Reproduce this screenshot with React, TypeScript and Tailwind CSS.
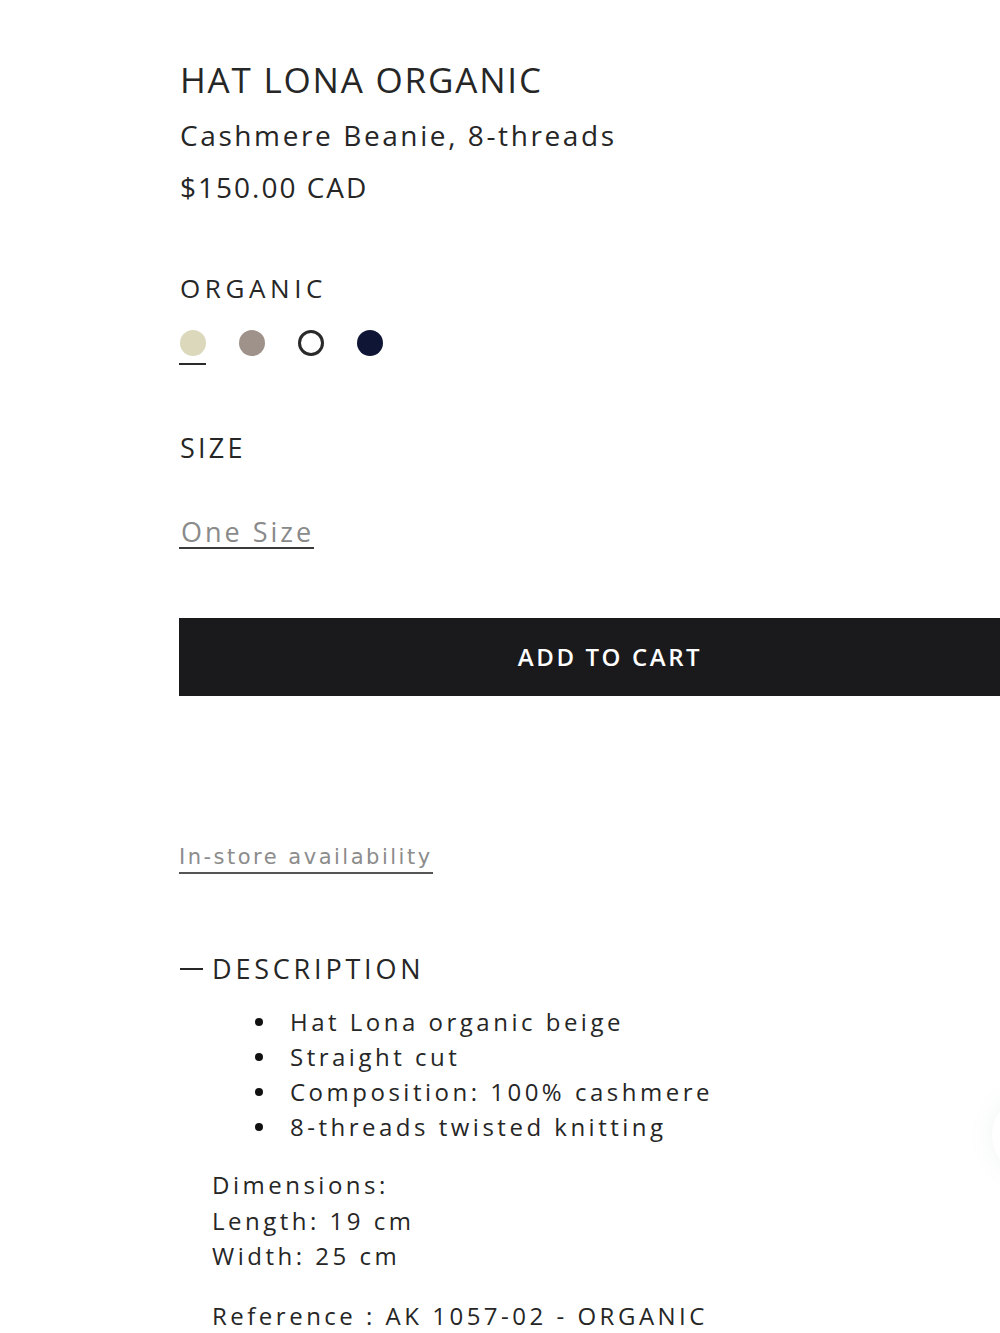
import React from "react";

const swatches = [
  { name: "Beige", cls: "bg-[#dcd8bc]", active: true },
  { name: "Taupe", cls: "bg-[#9e928a]", active: false },
  { name: "White", cls: "bg-white border-[3px] border-[#2a2a2a]", active: false },
  { name: "Navy", cls: "bg-[#0f1535]", active: false },
];

const bullets = [
  "Hat Lona organic beige",
  "Straight cut",
  "Composition: 100% cashmere",
  "8-threads twisted knitting",
];

const App = () => {
  return (
    <div className="relative w-[1000px] h-[1333px] overflow-hidden bg-white text-[#262626] font-['Open_Sans',sans-serif]">
      <div className="pl-[179px] pt-[60px]">
        {/* Product header */}
        <h1 className="text-[35px] leading-[40px] tracking-[1.8px] pl-[1px]">HAT LONA ORGANIC</h1>
        <p className="mt-[15px] text-[28px] leading-[40px] tracking-[2.6px] pl-[1px]">
          Cashmere Beanie, 8-threads
        </p>
        <p className="mt-[12px] text-[28px] leading-[40px] tracking-[2px] pl-[1px]">$150.00 CAD</p>

        {/* Colour */}
        <p className="mt-[61px] text-[26px] leading-[40px] tracking-[4.6px] pl-[1px]">ORGANIC</p>
        <div className="mt-[22px] flex gap-[32px]">
          {swatches.map((s) => (
            <button key={s.name} aria-label={s.name} className="flex flex-col items-center">
              <span className={`block w-[26px] h-[26px] rounded-full ${s.cls}`} />
              <span
                className={`block mt-[7px] w-[27px] h-[2px] ${s.active ? "bg-[#2a2a2a]" : "bg-transparent"}`}
              />
            </button>
          ))}
        </div>

        {/* Size */}
        <p className="mt-[63px] text-[27px] leading-[40px] tracking-[3.2px] pl-[1px]">SIZE</p>
        <div className="mt-[49px]">
          <span className="inline-block text-[27px] leading-[30px] tracking-[3px] text-[#8a8a8a] border-b-[2px] border-[#3a3a3a] pl-[2px]">
            One Size
          </span>
        </div>

        <button className="mt-[69px] block w-[862px] h-[78px] bg-[#1a1a1c] text-white text-[24px] font-semibold tracking-[2.6px]">
          ADD TO CART
        </button>

        <div className="mt-[146px]">
          <span className="inline-block text-[21px] leading-[30px] tracking-[2.5px] text-[#8c8c8c] border-b-[2px] border-[#555] font-['DejaVu_Sans',sans-serif]">
            In-store availability
          </span>
        </div>

        {/* Description */}
        <div className="mt-[77px] flex items-center h-[36px] text-[27px] tracking-[3.8px]">
          <span className="block w-[23px] h-[2px] bg-[#262626] ml-[1px]" />
          <span className="ml-[9px]">DESCRIPTION</span>
        </div>
        <div className="pl-[33px] text-[24px] tracking-[3.5px]">
          <ul className="mt-[17px]">
            {bullets.map((b) => (
              <li key={b} className="flex items-center h-[35px]">
                <span className="block w-[8px] h-[8px] rounded-full bg-[#111] ml-[43px]" />
                <span className="ml-[27px]">{b}</span>
              </li>
            ))}
          </ul>
          <div className="mt-[23px] leading-[35.5px]">
            <p>Dimensions:</p>
            <p>Length: 19 cm</p>
            <p>Width: 25 cm</p>
          </div>
          <p className="mt-[24px] leading-[36px]">Reference : AK 1057-02 - ORGANIC</p>
        </div>
      </div>

      {/* floating widget edge */}
      <div className="absolute left-[992px] top-[1095px] w-[80px] h-[80px] rounded-full bg-white shadow-[0_0_24px_rgba(120,140,150,0.10)]" />
    </div>
  );
};

export default App;
